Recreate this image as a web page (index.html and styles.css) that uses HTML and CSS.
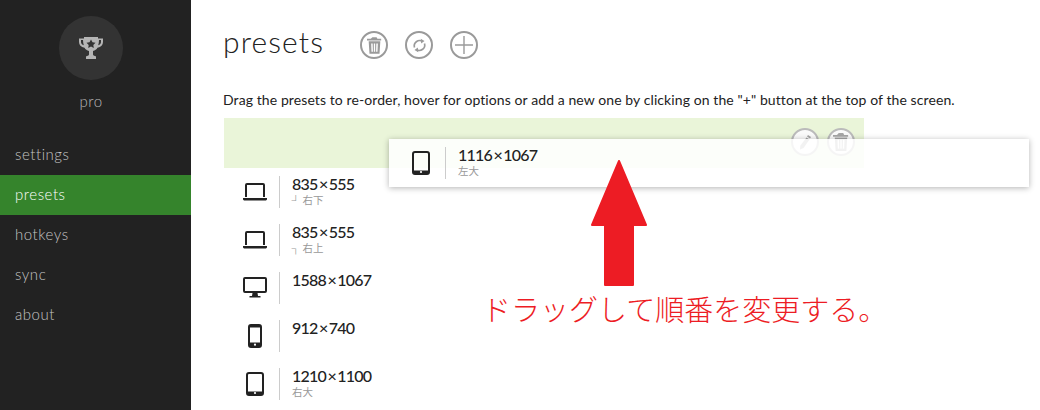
FILE: index.html
```html
<!DOCTYPE html>
<html lang="ja">
<head>
  <meta charset="UTF-8" />
  <title>presets</title>
  <link rel="stylesheet" href="styles.css">
</head>
<body>

  <aside class="sidebar">
    <div class="badge">
      <svg width="30" height="30" viewBox="0 0 30 30">
        <path fill="#b5b5b5" fill-rule="evenodd" d="M8 4h14v1.500h5v3.500c0 3-2 5-5.500 5.800-1 1.700-2.500 2.700-4.500 3.200v3.500c0 1 2 1.500 3 2v2.500h-10v-2.500c1-.5 3-1 3-2v-3.500c-2-.5-3.500-1.500-4.500-3.200-3.500-.8-5.500-2.800-5.500-5.800v-3.500h5zM5 7v2c0 1.500 1 2.600 2.800 3.300-.5-1.500-.8-3.300-.8-5.300zM25 7h-2c0 2-.3 3.800-.8 5.300 1.800-.7 2.800-1.800 2.800-3.300z"/>
        <path fill="#333" d="M15 6.500l1.500 2.800 3 .5-2.200 2.200.5 3-2.800-1.400-2.800 1.400.5-3-2.200-2.200 3-.5z"/>
      </svg>
    </div>
    <div class="plan">pro</div>
    <nav class="nav">
      <a href="#">settings</a>
      <a href="#" class="active">presets</a>
      <a href="#">hotkeys</a>
      <a href="#">sync</a>
      <a href="#">about</a>
    </nav>
  </aside>

  <main class="content">
    <div class="title-row">
      <h1>presets</h1>
      <div class="title-buttons">
        <button class="round-btn">
          <svg width="15" height="17" viewBox="0 0 18 20"><path fill="#9a9a9a" d="M6.500 0h5l1 2h4.500v2h-17v-2h4.500zM2 5h14l-1 15h-12zM5 7.500l.4 10h1.700l-.3-10zM8.200 7.500v10h1.600v-10zM11.200 7.500l-.3 10h1.700l.4-10z"/></svg>
        </button>
        <button class="round-btn">
          <svg width="15" height="15" viewBox="0 0 18 18" fill="none" stroke="#9a9a9a" stroke-width="2"><path d="M3 11.500a6.500 6.500 0 0 1 9.500-7.500"/><path d="M15 6.500a6.500 6.500 0 0 1-9.500 7.500"/><path fill="#9a9a9a" stroke="none" d="M10.500 1l4.500 2.500-4 3zM7.500 17l-4.500-2.500 4-3z"/></svg>
        </button>
        <button class="round-btn">
          <svg width="18" height="18" viewBox="0 0 18 18"><path fill="#9a9a9a" d="M8.300 0h1.400v8.300h8.300v1.400h-8.300v8.300h-1.400v-8.300h-8.300v-1.400h8.300z"/></svg>
        </button>
      </div>
    </div>

    <p class="help">Drag the presets to re-order, hover for options or add a new one by clicking on the "+" button at the top of the screen.</p>

    <div class="drop-slot">
      <span class="slot-btn">
        <svg width="16" height="16" viewBox="0 0 16 16"><path fill="#a5a5a5" d="M11 1l3 2-1 1.500-3-2zM9.500 3.500l3 2-6 8.500-3.500 1.500.3-3.800z"/></svg>
      </span>
      <span class="slot-btn">
        <svg width="16" height="18" viewBox="0 0 18 20"><path fill="#a5a5a5" d="M6.500 0h5l1 2h4.500v2h-17v-2h4.500zM2 5h14l-1 15h-12zM5 7.500l.4 10h1.700l-.3-10zM8.200 7.500v10h1.600v-10zM11.200 7.500l-.3 10h1.700l.4-10z"/></svg>
      </span>
    </div>

    <ul class="presets">
      <li class="preset">
        <span class="preset-icon">
          <svg width="24" height="20" viewBox="0 0 24 20"><path fill="none" stroke="#222" stroke-width="2" d="M3 15v-12a1 1 0 0 1 1-1h16a1 1 0 0 1 1 1v12"/><path fill="#222" d="M0 16h24v1.500l-1 1h-22l-1-1z"/></svg>
        </span>
        <div><div class="size">835 × 555</div><div class="note">┘ 右下</div></div>
      </li>
      <li class="preset">
        <span class="preset-icon">
          <svg width="24" height="20" viewBox="0 0 24 20"><path fill="none" stroke="#222" stroke-width="2" d="M3 15v-12a1 1 0 0 1 1-1h16a1 1 0 0 1 1 1v12"/><path fill="#222" d="M0 16h24v1.500l-1 1h-22l-1-1z"/></svg>
        </span>
        <div><div class="size">835 × 555</div><div class="note">┐ 右上</div></div>
      </li>
      <li class="preset">
        <span class="preset-icon">
          <svg width="24" height="22" viewBox="0 0 24 22"><path fill="none" stroke="#222" stroke-width="2" d="M2 1h20a1 1 0 0 1 1 1v12a1 1 0 0 1-1 1h-20a1 1 0 0 1-1-1v-12a1 1 0 0 1 1-1z"/><path fill="#222" d="M9.500 16h5l.5 3h2.500v1.500h-11v-1.500h2.500z"/></svg>
        </span>
        <div><div class="size">1588 × 1067</div></div>
      </li>
      <li class="preset">
        <span class="preset-icon">
          <svg width="14" height="24" viewBox="0 0 14 24"><rect x="1" y="1" width="12" height="22" rx="2" fill="none" stroke="#222" stroke-width="2"/><path fill="#222" d="M1 18.500h12v4.500h-12zM1 1h12v2.500h-12z"/><circle cx="7" cy="20.700" r="1.100" fill="#fff"/></svg>
        </span>
        <div><div class="size">912 × 740</div></div>
      </li>
      <li class="preset">
        <span class="preset-icon">
          <svg width="18" height="24" viewBox="0 0 18 24"><rect x="1" y="1" width="16" height="22" rx="2" fill="none" stroke="#222" stroke-width="2"/><path fill="#222" d="M1 19.500h16v3.500h-16z"/><circle cx="9" cy="21" r="1.100" fill="#fff"/></svg>
        </span>
        <div><div class="size">1210 × 1100</div><div class="note">右大</div></div>
      </li>
    </ul>
  </main>

  <!-- preset being dragged, sits over the list -->
  <div class="preset dragged">
    <span class="preset-icon">
      <svg width="18" height="24" viewBox="0 0 18 24"><rect x="1" y="1" width="16" height="22" rx="2" fill="none" stroke="#222" stroke-width="2"/><path fill="#222" d="M1 19.500h16v3.500h-16z"/><circle cx="9" cy="21" r="1.100" fill="#fff"/></svg>
    </span>
    <div><div class="size">1116 × 1067</div><div class="note">左大</div></div>
  </div>

  <svg class="arrow" width="58" height="126" viewBox="0 0 58 126">
    <path fill="#ed1c24" stroke="#ed1c24" stroke-width="2" stroke-linejoin="round" d="M29 1l27 64h-13v60h-28v-60h-13z"/>
  </svg>
  <div class="caption">ドラッグして順番を変更する。</div>

</body>
</html>
```

FILE: styles.css
```css
* {
  box-sizing: border-box;
}

body {
  margin: 0;
  height: 410px;
  overflow: hidden;
  display: flex;
  background: #fff;
  font-family: 'Lato', sans-serif;
  color: #222;
  position: relative;
}

.sidebar {
  width: 191px;
  flex-shrink: 0;
  background: #222;
  padding-top: 16px;
}

.badge {
  width: 64px;
  height: 64px;
  margin-left: 59px;
  border-radius: 50%;
  background: #333;
  display: flex;
  align-items: center;
  justify-content: center;
}

.plan {
  width: 182px;
  margin-top: 11px;
  text-align: center;
  font-size: 15px;
  font-weight: 300;
  line-height: 20px;
  color: #bbb;
  letter-spacing: 0.5px;
}

.nav {
  margin-top: 24px;
}

.nav a {
  display: block;
  height: 40px;
  padding-left: 15px;
  font-size: 15px;
  font-weight: 300;
  line-height: 38px;
  color: #c4c4c4;
  text-decoration: none;
  letter-spacing: 0.55px;
}

.nav a.active {
  background: #35842c;
  color: #fff;
}

.content {
  flex: 1;
  padding: 0 0 0 33px;
}

.title-row {
  display: flex;
  align-items: center;
  height: 90px;
}

.title-row h1 {
  margin: -8px 0 0 -1px;
  width: 137px;
  font-size: 30px;
  font-weight: 300;
  letter-spacing: 1.1px;
  color: #222;
}

.title-buttons {
  display: flex;
  gap: 17px;
}

.round-btn {
  width: 28px;
  height: 28px;
  padding: 0;
  border: 2px solid #9a9a9a;
  border-radius: 50%;
  background: none;
  display: flex;
  align-items: center;
  justify-content: center;
}

.help {
  margin: -1px 0 0 -1px;
  height: 29px;
  font-size: 14px;
  line-height: 22px;
  letter-spacing: 0.09px;
  white-space: nowrap;
  color: #222;
}

.drop-slot {
  width: 640px;
  height: 50px;
  background: #eaf5d9;
  display: flex;
  justify-content: flex-end;
  gap: 8px;
  padding: 10px 9px 0 0;
}

.slot-btn {
  width: 28px;
  height: 28px;
  border: 2px solid #bbb;
  border-radius: 50%;
  background: #fafafa;
  display: flex;
  align-items: center;
  justify-content: center;
}

.presets {
  margin: 8px 0 0;
  padding: 0;
  list-style: none;
}

.preset {
  display: flex;
  align-items: flex-start;
  height: 48px;
}

.preset-icon {
  width: 56px;
  height: 32px;
  margin-right: 12px;
  padding-left: 7px;
  border-right: 1px solid #ccc;
  display: flex;
  align-items: center;
  justify-content: center;
}

.size {
  margin-top: -1px;
  font-size: 16px;
  line-height: 17px;
  letter-spacing: -0.75px;
  word-spacing: -2px;
  color: #222;
  font-weight: 500;
}

.note {
  margin-top: 1px;
  font-family: 'Lato', 'Noto Sans CJK JP', sans-serif;
  font-size: 10.5px;
  line-height: 14px;
  color: #999;
}

.dragged {
  position: absolute;
  left: 389px;
  top: 139px;
  width: 640px;
  padding: 8px 0 0 1px;
  background: rgba(255, 255, 255, 0.85);
  box-shadow: 0 1px 6px rgba(0, 0, 0, 0.3);
}

.arrow {
  position: absolute;
  left: 590px;
  top: 160px;
}

.caption {
  position: absolute;
  left: 482px;
  top: 291px;
  font-family: 'Noto Sans CJK JP', sans-serif;
  font-size: 29px;
  font-weight: 300;
  line-height: 34px;
  white-space: nowrap;
  color: #ed1c24;
}
```
